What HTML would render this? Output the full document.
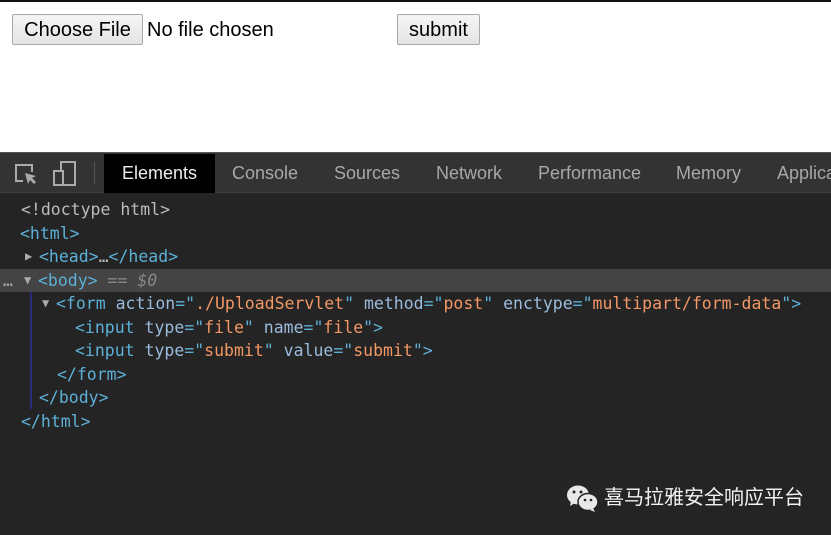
<!DOCTYPE html>
<html><head><style>
body{margin:0;width:831px;height:535px;overflow:hidden;background:#fff;font-family:"Liberation Sans",sans-serif;position:relative}
.top{position:absolute;left:0;top:0;width:831px;height:2px;background:#111}
.btn{position:absolute;top:14px;height:31px;border:1px solid #a9a9a9;border-radius:2px;background:linear-gradient(#f5f5f5,#e4e4e4);font-size:20px;line-height:31px;text-align:center;color:#000;box-sizing:border-box}
.dt{position:absolute;left:0;top:152px;width:831px;height:383px;background:#242424}
.bar{position:absolute;left:0;top:0;width:831px;height:41px;background:#333;border-top:1px solid #555;border-bottom:1px solid #3d3d3d;box-sizing:border-box}
.tab{position:absolute;top:1px;height:39px;line-height:39px;font-size:18px;color:#a8a8a8}
.code{position:absolute;left:0;top:46px;width:831px;font-family:"DejaVu Sans Mono",monospace;font-size:16.5px;line-height:23.5px;color:#bbb}
.l{height:23.5px;white-space:pre;position:relative}
.t{color:#5db0d7}.a{color:#9bbbdc}.v{color:#f29766}.g{color:#888;font-style:italic}
.ar{display:inline-block;width:14px;font-size:12px;color:#aaa;vertical-align:top}
.dots{display:inline-block;width:21px;color:#aaa;vertical-align:top}
</style></head><body>
<div class="top"></div>
<div class="btn" style="left:12px;width:131px">Choose File</div>
<div style="position:absolute;left:147px;top:15px;font-size:20px;line-height:31px">No file chosen</div>
<div class="btn" style="left:397px;width:83px">submit</div>
<div class="dt">
<div class="bar">
<svg style="position:absolute;left:14px;top:10px" width="24" height="24" viewBox="0 0 24 24" fill="none" stroke="#aaa" stroke-width="2"><path d="M9 18H2V2h16v7"/><path d="M11 10l3 11 2-4 4 4 2-2-4-4 4-2z" fill="#aaa" stroke="none"/></svg>
<svg style="position:absolute;left:53px;top:8px" width="24" height="26" viewBox="0 0 24 26" fill="none" stroke="#aaa" stroke-width="2"><rect x="8" y="1" width="14" height="23"/><rect x="1" y="10" width="9" height="14" fill="#333"/></svg>
<div style="position:absolute;left:94px;top:9px;width:1px;height:22px;background:#555"></div>
<div class="tab" style="left:104px;width:111px;background:#000;color:#eee;text-align:center">Elements</div>
<div class="tab" style="left:232px">Console</div>
<div class="tab" style="left:334px">Sources</div>
<div class="tab" style="left:436px">Network</div>
<div class="tab" style="left:538px">Performance</div>
<div class="tab" style="left:676px">Memory</div>
<div class="tab" style="left:777px">Applica</div>
</div>
<div class="code">
<div class="l" style="padding-left:21px">&lt;!doctype html&gt;</div>
<div class="l" style="padding-left:20px"><span class="t">&lt;html&gt;</span></div>
<div class="l" style="padding-left:25px"><span class="ar">▶</span><span class="t">&lt;head&gt;</span>…<span class="t">&lt;/head&gt;</span></div>
<div class="l" style="background:#444;padding-left:3px"><span class="dots">…</span><span class="ar">▼</span><span class="t">&lt;body&gt;</span> <span class="g">== $0</span></div>
<div class="l" style="padding-left:42px"><span class="ar">▼</span><span class="t">&lt;form</span> <span class="a">action</span><span class="t">="</span><span class="v">./UploadServlet</span><span class="t">"</span> <span class="a">method</span><span class="t">="</span><span class="v">post</span><span class="t">"</span> <span class="a">enctype</span><span class="t">="</span><span class="v">multipart/form-data</span><span class="t">"&gt;</span></div>
<div class="l" style="padding-left:75px"><span class="t">&lt;input</span> <span class="a">type</span><span class="t">="</span><span class="v">file</span><span class="t">"</span> <span class="a">name</span><span class="t">="</span><span class="v">file</span><span class="t">"&gt;</span></div>
<div class="l" style="padding-left:75px"><span class="t">&lt;input</span> <span class="a">type</span><span class="t">="</span><span class="v">submit</span><span class="t">"</span> <span class="a">value</span><span class="t">="</span><span class="v">submit</span><span class="t">"&gt;</span></div>
<div class="l" style="padding-left:57px"><span class="t">&lt;/form&gt;</span></div>
<div class="l" style="padding-left:39px"><span class="t">&lt;/body&gt;</span></div>
<div class="l" style="padding-left:21px"><span class="t">&lt;/html&gt;</span></div>
<div style="position:absolute;left:30px;top:94px;width:2px;height:117px;background:#2a2a7a"></div>
</div>
<svg style="position:absolute;left:566px;top:332px" width="34" height="30" viewBox="0 0 34 30"><ellipse cx="12" cy="11" rx="11" ry="9.5" fill="#e8e8e8"/><path d="M5 17l-1 5 5-3z" fill="#e8e8e8"/><ellipse cx="22" cy="18" rx="10" ry="8.5" fill="#e8e8e8" stroke="#242424" stroke-width="1.5"/><path d="M27 24l2 4-5-2z" fill="#e8e8e8"/><circle cx="8" cy="8" r="1.5" fill="#242424"/><circle cx="15" cy="8" r="1.5" fill="#242424"/><circle cx="19" cy="16" r="1.3" fill="#242424"/><circle cx="25" cy="16" r="1.3" fill="#242424"/></svg>
<div style="position:absolute;left:604px;top:333px;font-family:'Liberation Sans','Noto Sans CJK SC',sans-serif;font-size:20px;line-height:26px;color:#f2f2f2">喜马拉雅安全响应平台</div>
</div>
</body></html>
